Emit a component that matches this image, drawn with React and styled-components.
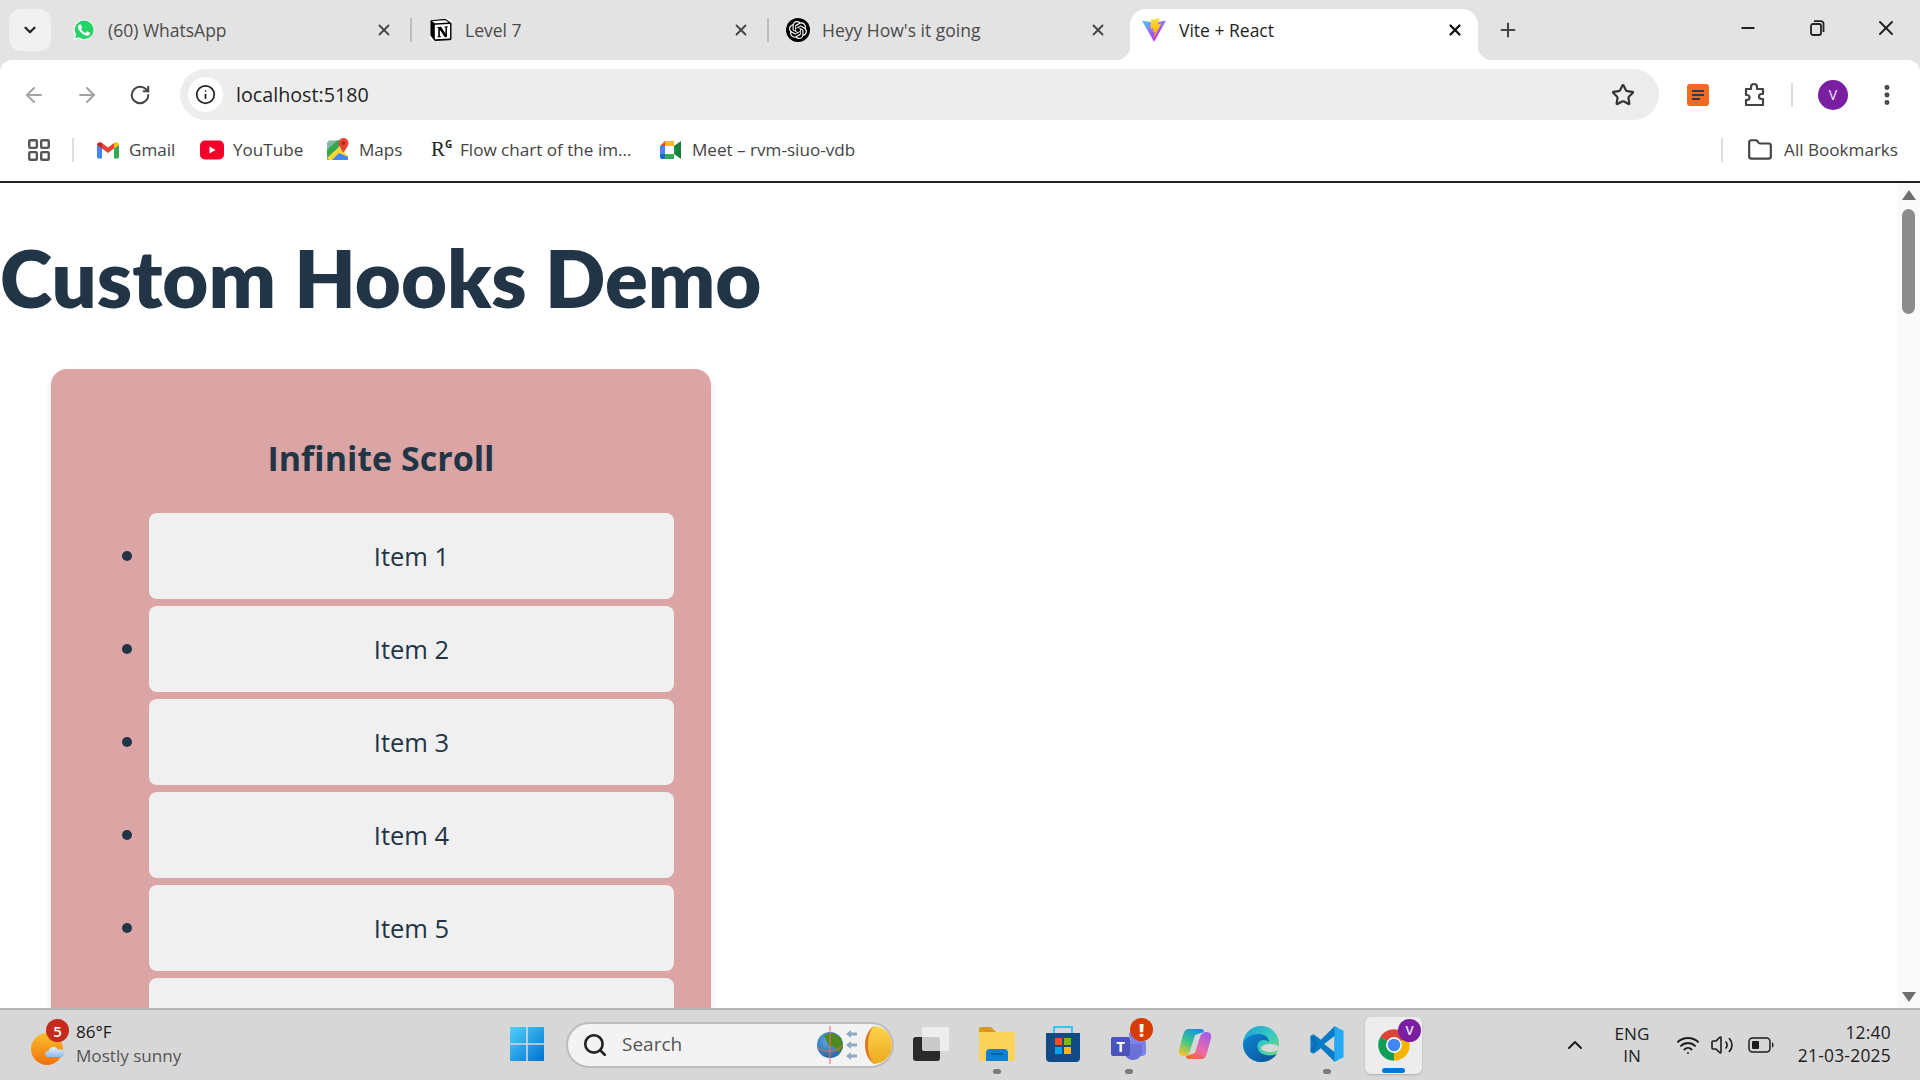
import styled, { createGlobalStyle } from "styled-components";
import { SiNotion, SiOpenai } from "react-icons/si";
import {
  ArrowLeft,
  ArrowRight,
  ChevronDown,
  ChevronUp,
  EllipsisVertical,
  Folder,
  Info,
  LayoutGrid,
  Minus,
  Plus,
  RotateCw,
  Search,
  Star,
  Volume2,
  Wifi,
  X,
} from "lucide-react";

const GlobalStyle = createGlobalStyle`
  html, body {
    margin: 0;
    padding: 0;
    width: 1920px;
    height: 1080px;
    overflow: hidden;
    background: #fff;
    font-family: "Open Sans", "Noto Sans", sans-serif;
  }
`;

//Icons
const WhatsAppIcon = () => (
  <svg width="26" height="26" viewBox="0 0 24 24">
    <path d="M12 1.2a10.6 10.6 0 0 0-9.1 16L1.2 22.8l5.8-1.5A10.6 10.6 0 1 0 12 1.2z" fill="#fff" stroke="#d8d8d8" strokeWidth=".4" />
    <path d="M12 2.6a9.2 9.2 0 0 0-7.8 14.1l-1 3.5 3.7-1A9.2 9.2 0 1 0 12 2.6z" fill="#25d366" />
    <path
      d="M17.472 14.382c-.297-.149-1.758-.867-2.03-.967-.273-.099-.471-.148-.67.15-.197.297-.767.966-.94 1.164-.173.199-.347.223-.644.075-.297-.15-1.255-.463-2.39-1.475-.883-.788-1.48-1.761-1.653-2.059-.173-.297-.018-.458.13-.606.134-.133.298-.347.446-.52.149-.174.198-.298.298-.497.099-.198.05-.371-.025-.52-.075-.149-.669-1.612-.916-2.207-.242-.579-.487-.5-.669-.51-.173-.008-.371-.01-.57-.01-.198 0-.52.074-.792.372-.272.297-1.04 1.016-1.04 2.479 0 1.462 1.065 2.875 1.213 3.074.149.198 2.096 3.2 5.077 4.487.709.306 1.262.489 1.694.625.712.227 1.36.195 1.871.118.571-.085 1.758-.719 2.006-1.413.248-.694.248-1.289.173-1.413-.074-.124-.272-.198-.57-.347"
      fill="#fff"
    />
  </svg>
);

const ViteIcon = () => (
  <svg width="24" height="24" viewBox="0 0 410 404">
    <defs>
      <linearGradient id="viteA" x1="6" y1="33" x2="235" y2="344" gradientUnits="userSpaceOnUse">
        <stop stopColor="#41D1FF" />
        <stop offset="1" stopColor="#BD34FE" />
      </linearGradient>
      <linearGradient id="viteB" x1="194" y1="8" x2="236" y2="293" gradientUnits="userSpaceOnUse">
        <stop stopColor="#FFEA83" />
        <stop offset=".08" stopColor="#FFDD35" />
        <stop offset="1" stopColor="#FFA800" />
      </linearGradient>
    </defs>
    <path
      d="M399.641 59.5246L215.643 388.545C211.844 395.338 202.084 395.378 198.228 388.618L10.5817 59.5563C6.38087 52.1896 12.6802 43.2665 21.0281 44.7586L205.223 77.6824C206.398 77.8924 207.601 77.8904 208.776 77.6763L389.119 44.8058C397.439 43.2894 403.768 52.1434 399.641 59.5246Z"
      fill="url(#viteA)"
    />
    <path
      d="M292.965 1.5744L156.801 28.2552C154.563 28.6937 152.906 30.5903 152.771 32.8664L144.395 174.33C144.198 177.662 147.258 180.248 150.51 179.498L188.42 170.749C191.967 169.931 195.172 173.055 194.443 176.622L183.18 231.775C182.422 235.487 185.907 238.661 189.532 237.56L212.947 230.446C216.577 229.344 220.065 232.527 219.297 236.242L201.398 322.875C200.278 328.294 207.486 331.249 210.492 326.603L212.5 323.5L323.454 102.072C325.312 98.3645 322.108 94.137 318.036 94.9228L279.014 102.454C275.347 103.161 272.227 99.746 273.262 96.1583L298.731 7.86689C299.767 4.27314 296.636 0.855181 292.965 1.5744Z"
      fill="url(#viteB)"
    />
  </svg>
);

const RestoreIcon = () => (
  <svg width="18" height="18" viewBox="0 0 18 18" fill="none" stroke="#222" strokeWidth="1.8">
    <rect x="3" y="5" width="10" height="11" rx="2" />
    <path d="M6 2.2h6.5A2.5 2.5 0 0 1 15.5 5v8" />
  </svg>
);

const ExtensionIcon = () => (
  <svg width="26" height="26" viewBox="0 0 26 26" fill="none" stroke="#444" strokeWidth="2.2" strokeLinejoin="round">
    <path d="M5 7h5V5a3 3 0 0 1 6 0v2h6v5h-1.500a2.500 2.500 0 0 0 0 5H22v6H5v-5h1a2.500 2.500 0 0 0 0-5H5z" />
  </svg>
);

const NotesIcon = () => (
  <svg width="22" height="22" viewBox="0 0 22 22">
    <rect width="22" height="22" rx="3" fill="#f26a21" />
    <path d="M5 7h12M5 11h12M5 15h8" stroke="#2a3c57" strokeWidth="2" />
  </svg>
);

const GmailIcon = () => (
  <svg width="24" height="24" viewBox="0 0 24 24">
    <path d="M1 7v12a1.600 1.600 0 0 0 1.600 1.600H6V10z" fill="#4285f4" />
    <path d="M23 7v12a1.600 1.600 0 0 1-1.600 1.600H18V10z" fill="#34a853" />
    <path d="M6 10.500l6 4.500 6-4.500V5l-6 4.500L6 5z" fill="#ea4335" />
    <path d="M1 7c0-2.500 2.800-3.600 4.500-2.300L6 5v5.500L1 7z" fill="#c5221f" />
    <path d="M23 7c0-2.500-2.800-3.600-4.500-2.300L18 5v5.500L23 7z" fill="#fbbc04" />
  </svg>
);

const YouTubeIcon = () => (
  <svg width="24" height="20" viewBox="0 0 24 20">
    <rect width="24" height="19" y=".5" rx="5" fill="#f40028" />
    <path d="M9.500 6.500l6 3.500-6 3.500z" fill="#fff" />
  </svg>
);

const MapsIcon = () => (
  <svg width="24" height="24" viewBox="0 0 24 24">
    <path d="M1 5l12-3v20L2 22a1 1 0 0 1-1-1z" fill="#34a853" />
    <path d="M3 2.500h8L1 12V4.500z" fill="#7fb8a4" />
    <path d="M1 20L13 9l9 9v3a1 1 0 0 1-1 1H3z" fill="#fdd835" />
    <path d="M13 15l9 4v2a1 1 0 0 1-1 1H6z" fill="#4285f4" />
    <path d="M17.500 0a5 5 0 0 0-5 5c0 3.500 5 9.500 5 9.500s5-6 5-9.500a5 5 0 0 0-5-5z" fill="#ea4335" />
    <circle cx="17.500" cy="5" r="1.800" fill="#a52714" />
  </svg>
);

const MeetIcon = () => (
  <svg width="24" height="24" viewBox="0 0 24 24">
    <path d="M1 8l5-5h9v5H6v8H1z" fill="#ea4335" />
    <path d="M6 3h9v5H6z" fill="#fbbc04" />
    <path d="M1 8h5v8H1z" fill="#4285f4" />
    <path d="M1 16h5v5H3a2 2 0 0 1-2-2z" fill="#1967d2" />
    <path d="M6 16h9v5H6z" fill="#34a853" />
    <path d="M15 8v8l7 5V3z" fill="#188038" />
    <path d="M15 8l3 4-3 4z" fill="#0f9d58" />
  </svg>
);

const WeatherIcon = () => (
  <svg width="34" height="34" viewBox="0 0 34 34">
    <defs>
      <linearGradient id="sun" x1="0" y1="0" x2="0" y2="1">
        <stop stopColor="#f8c02c" />
        <stop offset="1" stopColor="#f2700e" />
      </linearGradient>
      <linearGradient id="cloud" x1="0" y1="0" x2="0" y2="1">
        <stop stopColor="#e6f0fb" />
        <stop offset="1" stopColor="#8db8ec" />
      </linearGradient>
    </defs>
    <circle cx="16" cy="17" r="16" fill="url(#sun)" />
    <path d="M17 25a3 3 0 0 1 .5-6 5 5 0 0 1 9.500-1 3.600 3.600 0 0 1 4 7z" fill="url(#cloud)" />
  </svg>
);

const WindowsIcon = () => (
  <svg width="36" height="36" viewBox="0 0 36 36">
    <defs>
      <linearGradient id="win" x1="0" y1="0" x2="1" y2="1">
        <stop stopColor="#4fd2fb" />
        <stop offset="1" stopColor="#0070d1" />
      </linearGradient>
    </defs>
    <path d="M1 1h16.200v16.200H1zM18.800 1H35v16.200H18.800zM1 18.800h16.200V35H1zM18.800 18.800H35V35H18.800z" fill="url(#win)" />
  </svg>
);

const SearchArt = () => (
  <svg width="76" height="38" viewBox="0 0 76 38">
    <defs>
      <radialGradient id="earth" cx=".4" cy=".35" r=".8">
        <stop stopColor="#5aa7e0" />
        <stop offset="1" stopColor="#1d5b96" />
      </radialGradient>
      <linearGradient id="sunFace" x1="0" y1="0" x2="0" y2="1">
        <stop stopColor="#fcd34a" />
        <stop offset="1" stopColor="#eca91f" />
      </linearGradient>
    </defs>
    <circle cx="14" cy="19" r="13" fill="url(#earth)" />
    <path d="M8 9l9-2 8 5 2 9-4 6-4-6-6-1-3-6z" fill="#4f8a1e" />
    <path d="M14 0v38" stroke="#f26b5b" strokeWidth="1" />
    <path d="M1 21c6 6 20 6 26-2" stroke="#f26b5b" fill="none" strokeWidth="1" />
    <path d="M32 8h9M32 19h9M32 30h9" stroke="#8eabc6" strokeWidth="3" />
    <path d="M35 4l-5 4 5 4zM35 15l-5 4 5 4zM35 26l-5 4 5 4z" fill="#8eabc6" />
    <path d="M58 0c-6 4-9 11-9 19s3 15 9 19z" fill="#e0761f" />
    <path d="M58 0c12 1 18 10 18 19s-6 18-18 19c-4-4-6-11-6-19s2-15 6-19z" fill="url(#sunFace)" />
  </svg>
);

const TaskViewIcon = () => (
  <svg width="38" height="36" viewBox="0 0 38 36">
    <rect x="1" y="11" width="27" height="24" rx="3" fill="#2a2a2a" />
    <rect x="10" y="1" width="27" height="24" rx="2" fill="#f3f3f3" fillOpacity=".8" />
  </svg>
);

const FolderIcon = () => (
  <svg width="38" height="36" viewBox="0 0 38 36">
    <path d="M1 3a2 2 0 0 1 2-2h10l5 5H1z" fill="#d99a0e" />
    <path d="M1 6h35a1 1 0 0 1 1 1v27a1 1 0 0 1-1 1H2a1 1 0 0 1-1-1z" fill="#fbd35a" />
    <path d="M8 35V27a4 4 0 0 1 4-4h14a4 4 0 0 1 4 4v8z" fill="#0d7fd0" />
    <path d="M13 28h12" stroke="#08508c" strokeWidth="1.500" />
  </svg>
);

const StoreIcon = () => (
  <svg width="36" height="36" viewBox="0 0 36 36">
    <path d="M9 7V1h18v6" fill="none" stroke="#3cc3ee" strokeWidth="2" />
    <path d="M1 7h34v25a4 4 0 0 1-4 4H5a4 4 0 0 1-4-4z" fill="#114a85" />
    <path d="M10 12h7v7h-7z" fill="#f25022" />
    <path d="M19 12h7v7h-7z" fill="#7fba00" />
    <path d="M10 21h7v7h-7z" fill="#00a4ef" />
    <path d="M19 21h7v7h-7z" fill="#ffb900" />
  </svg>
);

const TeamsIcon = () => (
  <svg width="36" height="36" viewBox="0 0 36 36">
    <circle cx="24" cy="9" r="6" fill="#7b83eb" />
    <rect x="12" y="14" width="23" height="16" rx="4" fill="#7b83eb" />
    <path d="M14 18h17v8a9 9 0 0 1-17 3z" fill="#6a71d6" />
    <rect x="0" y="11" width="19" height="19" rx="2" fill="#4b53bc" />
    <text x="9.500" y="26" fontSize="15" fontWeight="700" fill="#fff" textAnchor="middle" fontFamily="Open Sans">T</text>
  </svg>
);

const CopilotIcon = () => (
  <svg width="34" height="34" viewBox="0 0 34 34">
    <defs>
      <linearGradient id="copA" x1=".7" y1="0" x2=".2" y2="1">
        <stop stopColor="#1a8fe3" />
        <stop offset=".5" stopColor="#36c78a" />
        <stop offset="1" stopColor="#f5c32c" />
      </linearGradient>
      <linearGradient id="copB" x1=".8" y1="0" x2=".2" y2="1">
        <stop stopColor="#a45be6" />
        <stop offset=".6" stopColor="#ea6aa8" />
        <stop offset="1" stopColor="#f4652f" />
      </linearGradient>
    </defs>
    <path d="M24 32H11c-2 0-3-1-3-3l9-3 5-16c1-3 3-5 6-5h1c3 0 5 3 4 6l-4 15c-1 4-3 6-5 6z" fill="url(#copB)" />
    <path d="M10 2h13c2 0 3 1 3 3l-9 3-5 16c-1 3-3 5-6 5H5c-3 0-5-3-4-6L5 8c1-4 3-6 5-6z" fill="url(#copA)" />
  </svg>
);

const EdgeIcon = () => (
  <svg width="36" height="36" viewBox="0 0 36 36">
    <defs>
      <linearGradient id="edgeA" x1="0" y1="0" x2="1" y2="1">
        <stop stopColor="#1b9de2" />
        <stop offset=".5" stopColor="#36c9c0" />
        <stop offset="1" stopColor="#7bdd6a" />
      </linearGradient>
      <linearGradient id="edgeB" x1="0" y1="0" x2="1" y2="1">
        <stop stopColor="#0f86d2" />
        <stop offset="1" stopColor="#0c4f96" />
      </linearGradient>
    </defs>
    <circle cx="18" cy="18" r="18" fill="url(#edgeA)" />
    <path d="M16 8C7 8 0 13 0 18c0 10 8 18 18 18 7 0 12-3 16-8-5 2-12 2-16-1-4-3-5-9-1-12 3-2 7-1 9 1 0-4-4-8-10-8z" fill="url(#edgeB)" />
    <ellipse cx="27" cy="22" rx="9" ry="4" fill="#d7d7d7" />
  </svg>
);

const VSCodeIcon = () => (
  <svg width="36" height="36" viewBox="0 0 100 100">
    <path d="M71 1L33 38 13 23l-9 4v46l9 4 20-15 38 37 10-5V6zM71 28v44L42 50z" fill="#0a7cc7" fillRule="evenodd" />
    <path d="M71 1l25 12v74L71 99z" fill="#24a9f2" />
    <path d="M4 32l8-4 14 22-14 22-8-4 11-18z" fill="#0a6fb5" />
  </svg>
);

const ChromeIcon = () => (
  <svg width="38" height="38" viewBox="0 0 48 48">
    <path d="M24 24L6.700 14A20 20 0 0 1 41.300 14z" fill="#db4437" />
    <path d="M24 24L41.300 14A20 20 0 0 1 24 44z" fill="#f5b400" />
    <path d="M24 24V44A20 20 0 0 1 6.700 14z" fill="#0f9d58" />
    <circle cx="24" cy="24" r="10" fill="#fff" />
    <circle cx="24" cy="24" r="8" fill="#4285f4" />
  </svg>
);

const BatteryIcon = () => (
  <svg width="26" height="16" viewBox="0 0 26 16" fill="none">
    <rect x="1" y="1" width="21" height="14" rx="3.500" stroke="#1d1d1d" strokeWidth="1.500" />
    <rect x="4" y="4" width="7" height="8" rx="1" fill="#1d1d1d" />
    <path d="M24 5.500c1.300 0 1.500 1 1.500 2.500s-.2 2.500-1.500 2.500z" fill="#1d1d1d" />
  </svg>
);

//The sixth row is cut by the taskbar before its label shows
const items = ["Item 1", "Item 2", "Item 3", "Item 4", "Item 5", ""];

const App = () => {
  const bookmarks = [
    { label: "Gmail", icon: <GmailIcon />, gap: 9, width: 104 },
    { label: "YouTube", icon: <YouTubeIcon />, gap: 9, width: 126 },
    { label: "Maps", icon: <MapsIcon />, gap: 9, width: 105 },
    { label: "Flow chart of the im...", icon: <ResearchMark>R<sup>G</sup></ResearchMark>, gap: 13, width: 228 },
    { label: "Meet – rvm-siuo-vdb", icon: <MeetIcon />, gap: 9, width: 210 },
  ];

  return (
    <Screen>
      <GlobalStyle />
      <TabStrip>
        <TabSearch>
          <ChevronDown size={18} strokeWidth={3} color="#222" />
        </TabSearch>
        <Tab>
          <TabIcon><WhatsAppIcon /></TabIcon>
          <TabLabel>(60) WhatsApp</TabLabel>
          <TabClose><X size={18} strokeWidth={2.4} /></TabClose>
        </Tab>
        <TabDivider />
        <Tab>
          <TabIcon>
            <NotionBadge><SiNotion size={22} color="#000" /></NotionBadge>
          </TabIcon>
          <TabLabel>Level 7</TabLabel>
          <TabClose><X size={18} strokeWidth={2.4} /></TabClose>
        </Tab>
        <TabDivider />
        <Tab>
          <TabIcon>
            <OpenAiBadge><SiOpenai size={18} color="#fff" /></OpenAiBadge>
          </TabIcon>
          <TabLabel>Heyy How's it going</TabLabel>
          <TabClose><X size={18} strokeWidth={2.4} /></TabClose>
        </Tab>
        <Tab $active>
          <TabIcon><ViteIcon /></TabIcon>
          <TabLabel $active>Vite + React</TabLabel>
          <TabClose $active><X size={18} strokeWidth={3} /></TabClose>
        </Tab>
        <NewTab><Plus size={22} strokeWidth={2.2} color="#444" /></NewTab>
        <WindowControls>
          <WindowButton><Minus size={20} strokeWidth={2.2} color="#222" /></WindowButton>
          <WindowButton><RestoreIcon /></WindowButton>
          <WindowButton><X size={24} strokeWidth={2} color="#222" /></WindowButton>
        </WindowControls>
      </TabStrip>

      <Toolbar>
        <NavButton><ArrowLeft size={24} color="#a3a3a3" strokeWidth={2} /></NavButton>
        <NavButton><ArrowRight size={24} color="#a3a3a3" strokeWidth={2} /></NavButton>
        <NavButton><RotateCw size={22} color="#444" strokeWidth={2.2} /></NavButton>
        <Omnibox>
          <SiteInfo><Info size={21} color="#222" strokeWidth={2} /></SiteInfo>
          <Address>localhost:5180</Address>
          <StarSlot><Star size={24} color="#333" strokeWidth={2.2} /></StarSlot>
        </Omnibox>
        <ToolbarActions>
          <ActionSlot $width={56}><NotesIcon /></ActionSlot>
          <ActionSlot $width={56}><ExtensionIcon /></ActionSlot>
          <ActionDivider />
          <ActionSlot $width={58}><Avatar>V</Avatar></ActionSlot>
          <ActionSlot $width={50}><EllipsisVertical size={26} color="#444" strokeWidth={2.6} /></ActionSlot>
        </ToolbarActions>
      </Toolbar>

      <BookmarkBar>
        <AppsSlot><LayoutGrid size={26} color="#555" strokeWidth={2.2} /></AppsSlot>
        <BarDivider />
        {bookmarks.map((mark) => (
          <Bookmark key={mark.label} $gap={mark.gap} $width={mark.width}>
            {mark.icon}
            <span>{mark.label}</span>
          </Bookmark>
        ))}
        <AllBookmarks>
          <BarDivider />
          <Folder size={26} color="#444" strokeWidth={2} />
          <span>All Bookmarks</span>
        </AllBookmarks>
      </BookmarkBar>

      <Viewport>
        <Content>
          <Title>Custom Hooks Demo</Title>
          <Card>
            <CardTitle>Infinite Scroll</CardTitle>
            <ItemList>
              {items.map((item, index) => (
                <Item key={index}>{item}</Item>
              ))}
            </ItemList>
          </Card>
        </Content>
        <Scrollbar>
          <ScrollArrow $up />
          <ScrollThumb />
          <ScrollArrow />
        </Scrollbar>
      </Viewport>

      <Taskbar>
        <Weather>
          <WeatherArt>
            <WeatherIcon />
            <WeatherBadge>5</WeatherBadge>
          </WeatherArt>
          <WeatherText>
            <Temperature>86°F</Temperature>
            <Forecast>Mostly sunny</Forecast>
          </WeatherText>
        </Weather>
        <TaskSlot><WindowsIcon /></TaskSlot>
        <SearchPill>
          <Search size={26} color="#222" strokeWidth={2.4} />
          <SearchText>Search</SearchText>
          <SearchArt />
        </SearchPill>
        <TaskSlot><TaskViewIcon /></TaskSlot>
        <TaskSlot $running><FolderIcon /></TaskSlot>
        <TaskSlot><StoreIcon /></TaskSlot>
        <TaskSlot $running>
          <TeamsIcon />
          <AlertBadge>!</AlertBadge>
        </TaskSlot>
        <TaskSlot><CopilotIcon /></TaskSlot>
        <TaskSlot><EdgeIcon /></TaskSlot>
        <TaskSlot $running><VSCodeIcon /></TaskSlot>
        <ActiveTask>
          <ChromeIcon />
          <ProfileBadge>V</ProfileBadge>
          <ActiveBar />
        </ActiveTask>
        <Tray>
          <TraySlot $width={36}><ChevronUp size={24} color="#1d1d1d" strokeWidth={2} /></TraySlot>
          <Language>
            <span>ENG</span>
            <span>IN</span>
          </Language>
          <TraySlot $width={34}><Wifi size={24} color="#1d1d1d" strokeWidth={2} /></TraySlot>
          <TraySlot $width={34}><Volume2 size={24} color="#1d1d1d" strokeWidth={1.6} /></TraySlot>
          <TraySlot $width={44}><BatteryIcon /></TraySlot>
          <Clock>
            <span>12:40</span>
            <span>21-03-2025</span>
          </Clock>
        </Tray>
      </Taskbar>
    </Screen>
  );
};

const Screen = styled.div`
  width: 1920px;
  height: 1080px;
  display: flex;
  flex-direction: column;
  overflow: hidden;
  background: #e3e3e3;
`;

//Tab strip
const TabStrip = styled.div`
  height: 60px;
  flex: none;
  display: flex;
  align-items: flex-start;
  padding-top: 9px;
  padding-left: 9px;
  box-sizing: border-box;
`;

const TabSearch = styled.div`
  width: 42px;
  height: 42px;
  margin-right: 4px;
  display: flex;
  align-items: center;
  justify-content: center;
  border-radius: 12px;
  background: #f1f1f1;
`;

const Tab = styled.div`
  position: relative;
  box-sizing: border-box;
  height: 51px;
  width: ${(p) => (p.$active ? "348px" : "355px")};
  margin-left: ${(p) => (p.$active ? "6px" : "0")};
  padding-left: ${(p) => (p.$active ? "12px" : "17px")};
  padding-right: ${(p) => (p.$active ? "13px" : "16px")};
  padding-bottom: 9px;
  display: flex;
  align-items: center;
  background: ${(p) => (p.$active ? "#fff" : "transparent")};
  border-radius: 16px 16px 0 0;

  ${(p) =>
    p.$active &&
    `
    &::before, &::after {
      content: "";
      position: absolute;
      bottom: 0;
      width: 14px;
      height: 14px;
    }
    &::before {
      left: -14px;
      background: radial-gradient(circle at 0 0, transparent 14px, #fff 14.5px);
    }
    &::after {
      right: -14px;
      background: radial-gradient(circle at 100% 0, transparent 14px, #fff 14.5px);
    }
  `}
`;

const TabIcon = styled.div`
  width: 24px;
  height: 26px;
  flex: none;
  display: flex;
  align-items: center;
  justify-content: center;
`;

const NotionBadge = styled.div`
  width: 22px;
  height: 22px;
  display: flex;
  background: #fff;
  border-radius: 4px;
`;

const OpenAiBadge = styled.div`
  width: 24px;
  height: 24px;
  display: flex;
  align-items: center;
  justify-content: center;
  border-radius: 50%;
  background: #000;
`;

const TabLabel = styled.span`
  flex: 1;
  margin-left: ${(p) => (p.$active ? "13px" : "12px")};
  font-size: 17.5px;
  white-space: nowrap;
  color: ${(p) => (p.$active ? "#1f1f1f" : "#4b4b4b")};
`;

const TabClose = styled.div`
  width: 20px;
  height: 20px;
  display: flex;
  align-items: center;
  justify-content: center;
  color: ${(p) => (p.$active ? "#111" : "#444")};
`;

const TabDivider = styled.div`
  width: 2px;
  height: 24px;
  margin-top: 9px;
  background: #bdbdbd;
`;

const NewTab = styled.div`
  width: 24px;
  height: 24px;
  margin-left: 18px;
  margin-top: 9px;
  display: flex;
  align-items: center;
  justify-content: center;
`;

const WindowControls = styled.div`
  margin-left: auto;
  display: flex;
`;

const WindowButton = styled.div`
  width: 69px;
  height: 30px;
  margin-top: 4px;
  display: flex;
  align-items: center;
  justify-content: center;
`;

//Toolbar
const Toolbar = styled.div`
  height: 60px;
  flex: none;
  box-sizing: border-box;
  display: flex;
  align-items: flex-start;
  padding: 9px 0 0 7px;
  background: #fff;
  border-radius: 12px 12px 0 0;
`;

const NavButton = styled.div`
  width: 53px;
  height: 51px;
  display: flex;
  align-items: center;
  justify-content: center;
`;

const Omnibox = styled.div`
  width: 1479px;
  height: 51px;
  margin-left: 14px;
  box-sizing: border-box;
  display: flex;
  align-items: center;
  padding-left: 8px;
  padding-right: 24px;
  background: #eeedee;
  border-radius: 26px;
`;

const SiteInfo = styled.div`
  width: 35px;
  height: 35px;
  display: flex;
  align-items: center;
  justify-content: center;
  border-radius: 50%;
  background: #fff;
`;

const Address = styled.span`
  margin-left: 13px;
  font-size: 19.7px;
  color: #1f1f1f;
`;

const StarSlot = styled.div`
  margin-left: auto;
  display: flex;
`;

const ToolbarActions = styled.div`
  height: 51px;
  margin-left: 11px;
  display: flex;
  align-items: center;
`;

const ActionSlot = styled.div`
  width: ${(p) => p.$width}px;
  display: flex;
  align-items: center;
  justify-content: center;
`;

const ActionDivider = styled.div`
  width: 2px;
  height: 24px;
  margin: 0 11px 0 9px;
  background: #dcdcdc;
`;

const Avatar = styled.div`
  width: 30px;
  height: 30px;
  display: flex;
  align-items: center;
  justify-content: center;
  border-radius: 50%;
  background: #7b1fa2;
  color: #f2e6f7;
  font-size: 14px;
`;

//Bookmarks
const BookmarkBar = styled.div`
  height: 61px;
  flex: none;
  box-sizing: border-box;
  display: flex;
  align-items: center;
  padding-left: 26px;
  padding-bottom: 2px;
  background: #fff;
`;

const AppsSlot = styled.div`
  width: 26px;
  margin-right: 20px;
  display: flex;
`;

const BarDivider = styled.div`
  width: 2px;
  height: 24px;
  background: #dedede;
`;

const Bookmark = styled.div`
  width: ${(p) => p.$width}px;
  display: flex;
  align-items: center;
  gap: ${(p) => p.$gap}px;
  font-size: 17.1px;
  color: #444;
  white-space: nowrap;

  ${BarDivider} + & {
    margin-left: 22px;
  }
`;

const ResearchMark = styled.span`
  width: 16px;
  font-family: "Liberation Serif", serif;
  font-size: 21px;
  color: #222;

  sup {
    font-family: "Open Sans", sans-serif;
    font-size: 10px;
    font-weight: 700;
    line-height: 0;
  }
`;

const AllBookmarks = styled.div`
  margin-left: auto;
  padding-right: 22px;
  display: flex;
  align-items: center;
  font-size: 17.1px;
  color: #444;
  white-space: nowrap;

  svg {
    margin: 0 11px 0 24px;
  }
`;

//Page
const Viewport = styled.div`
  height: 827px;
  flex: none;
  display: flex;
  background: #fff;
  border-top: 2px solid #222;
  box-sizing: border-box;
`;

const Content = styled.main`
  flex: 1;
  overflow: hidden;
  color: #213547;
`;

const Title = styled.h1`
  margin: 0;
  padding-top: 45px;
  font-family: Lato, "Open Sans", sans-serif;
  font-size: 79.4px;
  line-height: 100px;
  font-weight: 800;
  white-space: nowrap;
`;

const Card = styled.section`
  width: 660px;
  margin: 41px 0 0 51px;
  box-sizing: border-box;
  padding: 51px 37px 0 0;
  background: #dca5a5;
  border-radius: 16px;
  box-shadow: 0 4px 8px rgba(0, 0, 0, 0.1);
`;

const CardTitle = styled.h2`
  margin: 0;
  padding-left: 37px;
  text-align: center;
  font-size: 34px;
  line-height: 76px;
  font-weight: 700;
`;

const ItemList = styled.ul`
  margin: 17px 0 0;
  padding: 0 0 0 98px;
  list-style: disc;
`;

const Item = styled.li`
  height: 86px;
  margin-bottom: 7px;
  line-height: 85px;
  text-align: center;
  font-size: 25.5px;
  background: #f0f0f0;
  border-radius: 8px;

  &::marker {
    font-size: 28px;
  }
`;

const Scrollbar = styled.div`
  width: 23px;
  flex: none;
  display: flex;
  flex-direction: column;
  align-items: center;
  background: #fafafa;
`;

const ScrollArrow = styled.div`
  width: 0;
  height: 0;
  margin: ${(p) => (p.$up ? "7px 0 0" : "auto 0 6px")};
  border-left: 7px solid transparent;
  border-right: 7px solid transparent;
  ${(p) => (p.$up ? "border-bottom: 10px solid #6e6e6e;" : "border-top: 10px solid #6e6e6e;")}
`;

const ScrollThumb = styled.div`
  width: 13px;
  height: 105px;
  margin-top: 9px;
  border-radius: 7px;
  background: #8c8c8c;
`;

//Taskbar
const Taskbar = styled.footer`
  height: 72px;
  flex: none;
  box-sizing: border-box;
  display: flex;
  align-items: center;
  background: #d7d7d7;
  border-top: 2px solid #b3b3b3;
`;

const Weather = styled.div`
  width: 494px;
  flex: none;
  box-sizing: border-box;
  padding-left: 31px;
  display: flex;
  align-items: center;
`;

const WeatherArt = styled.div`
  position: relative;
  width: 34px;
  height: 34px;
  margin-top: 8px;
  display: flex;
`;

const WeatherBadge = styled.div`
  position: absolute;
  left: 15px;
  top: -13px;
  width: 23px;
  height: 23px;
  display: flex;
  align-items: center;
  justify-content: center;
  border-radius: 50%;
  background: #c42b1c;
  color: #fff;
  font-size: 15px;
  font-weight: 600;
`;

const WeatherText = styled.div`
  margin: 0 0 2px 11px;
  display: flex;
  flex-direction: column;
`;

const Temperature = styled.span`
  font-size: 17.1px;
  line-height: 24px;
  color: #1a1a1a;
`;

const Forecast = styled.span`
  font-size: 17.1px;
  line-height: 24px;
  color: #555;
`;

const TaskSlot = styled.div`
  position: relative;
  width: 66px;
  height: 70px;
  flex: none;
  display: flex;
  align-items: center;
  justify-content: center;
  padding-bottom: 2px;
  box-sizing: border-box;

  ${(p) =>
    p.$running &&
    `
    &::after {
      content: "";
      position: absolute;
      bottom: 6px;
      left: 29px;
      width: 8px;
      height: 5px;
      border-radius: 3px;
      background: #7a7a7a;
    }
  `}
`;

const SearchPill = styled.div`
  width: 328px;
  height: 46px;
  margin: 0 4px 0 6px;
  flex: none;
  box-sizing: border-box;
  display: flex;
  align-items: center;
  padding: 0 0 0 14px;
  background: #f3f3f3;
  border: 2px solid #bdbdbd;
  border-radius: 23px;
`;

const SearchText = styled.span`
  flex: 1;
  margin: 0 0 2px 14px;
  font-size: 19px;
  color: #555;
`;

const AlertBadge = styled.div`
  position: absolute;
  left: 34px;
  top: 8px;
  width: 23px;
  height: 23px;
  display: flex;
  align-items: center;
  justify-content: center;
  border-radius: 50%;
  background: #d83b01;
  color: #fff;
  font-size: 18px;
  font-weight: 800;
`;

const ActiveTask = styled.div`
  position: relative;
  width: 57px;
  height: 57px;
  margin: 0 5px 0 5px;
  flex: none;
  display: flex;
  align-items: center;
  justify-content: center;
  background: #ededed;
  border-radius: 6px;
  box-shadow: 0 1px 2px rgba(0, 0, 0, 0.2);
`;

const ProfileBadge = styled.div`
  position: absolute;
  top: 2px;
  right: 1px;
  width: 23px;
  height: 23px;
  display: flex;
  align-items: center;
  justify-content: center;
  border-radius: 50%;
  background: #7b1fa2;
  color: #f0e0f5;
  font-size: 13px;
  font-weight: 600;
`;

const ActiveBar = styled.div`
  position: absolute;
  bottom: 1px;
  left: 17px;
  width: 23px;
  height: 5px;
  border-radius: 3px;
  background: #0078d4;
`;

const Tray = styled.div`
  margin-left: auto;
  padding-right: 29px;
  display: flex;
  align-items: center;
  color: #1d1d1d;
  font-size: 17.1px;
`;

const TraySlot = styled.div`
  width: ${(p) => p.$width}px;
  display: flex;
  align-items: center;
  justify-content: center;
`;

const Language = styled.div`
  width: 46px;
  margin: 0 16px 0 16px;
  display: flex;
  flex-direction: column;
  align-items: center;
  line-height: 22px;
`;

const Clock = styled.div`
  width: 96px;
  margin-left: 12px;
  display: flex;
  flex-direction: column;
  align-items: flex-end;
  line-height: 23px;
  margin-bottom: 2px;
  white-space: nowrap;
  font-size: 17.4px;
  letter-spacing: 0.25px;
`;

export default App;
